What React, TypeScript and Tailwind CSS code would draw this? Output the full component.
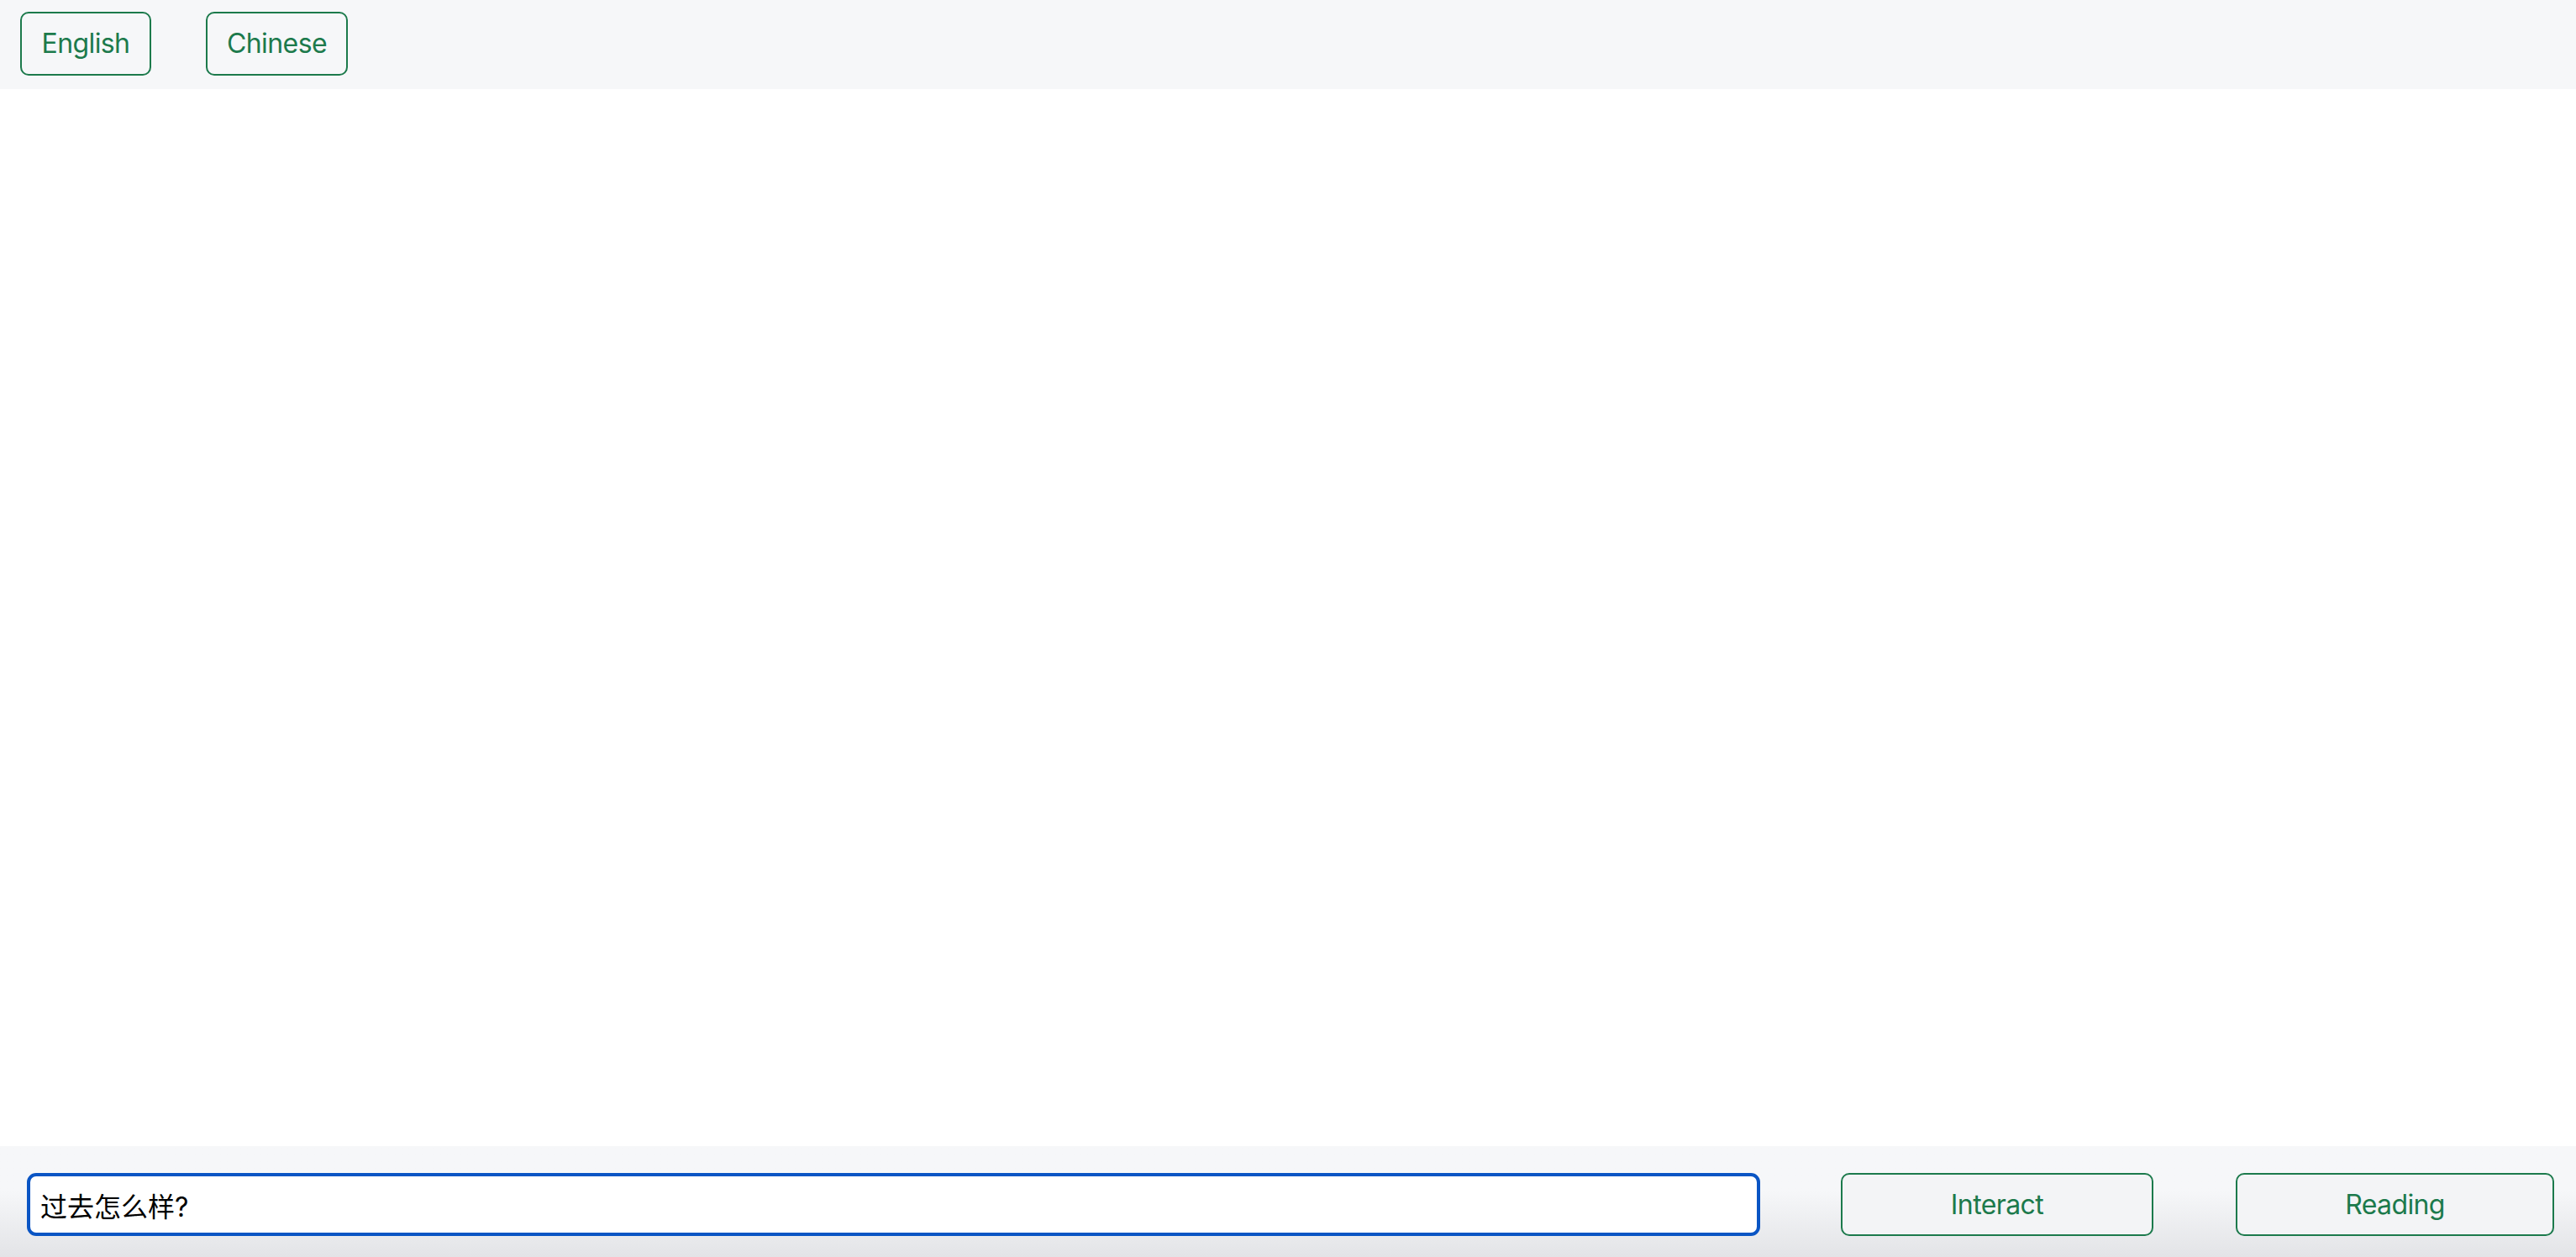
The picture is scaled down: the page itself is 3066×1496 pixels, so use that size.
export default function App() {
  const font = { fontFamily: 'Inter, "Noto Sans CJK SC", sans-serif' };

  return (
    <div className="h-[1496px] flex flex-col bg-white" style={font}>
      {/* Language bar */}
      <div className="h-[106px] bg-[#f6f7f9] flex items-start pt-[14px] pl-[24px] gap-[65px]">
        <button className="w-[156px] h-[76px] border-2 border-[#1c7a4c] rounded-[10px] text-[32px] tracking-[-0.6px] text-[#1c7a4c] leading-none">
          English
        </button>
        <button className="w-[169px] h-[76px] border-2 border-[#1c7a4c] rounded-[10px] text-[32px] tracking-[-0.6px] text-[#1c7a4c] leading-none">
          Chinese
        </button>
      </div>

      {/* Content */}
      <div className="flex-1 bg-white" />

      {/* Input bar */}
      <div className="h-[132px] bg-gradient-to-b from-[#f6f7f9] from-40% to-[#e3e4e7] flex items-start pt-[32px] pl-[32px] pr-[26px]">
        <input
          defaultValue="过去怎么样?"
          className="w-[2063px] h-[75px] border-[4px] border-[#0a55c4] rounded-[11px] bg-white px-[12px] text-[32px] text-black outline-none"
        />
        <button className="ml-[96px] w-[372px] h-[75px] border-2 border-[#1c7a4c] rounded-[10px] text-[32px] tracking-[-0.6px] text-[#1c7a4c] bg-[#f3f4f6]">
          Interact
        </button>
        <button className="ml-[98px] w-[379px] h-[75px] border-2 border-[#1c7a4c] rounded-[10px] text-[32px] tracking-[-0.6px] text-[#1c7a4c] bg-[#f3f4f6]">
          Reading
        </button>
      </div>
    </div>
  );
}
